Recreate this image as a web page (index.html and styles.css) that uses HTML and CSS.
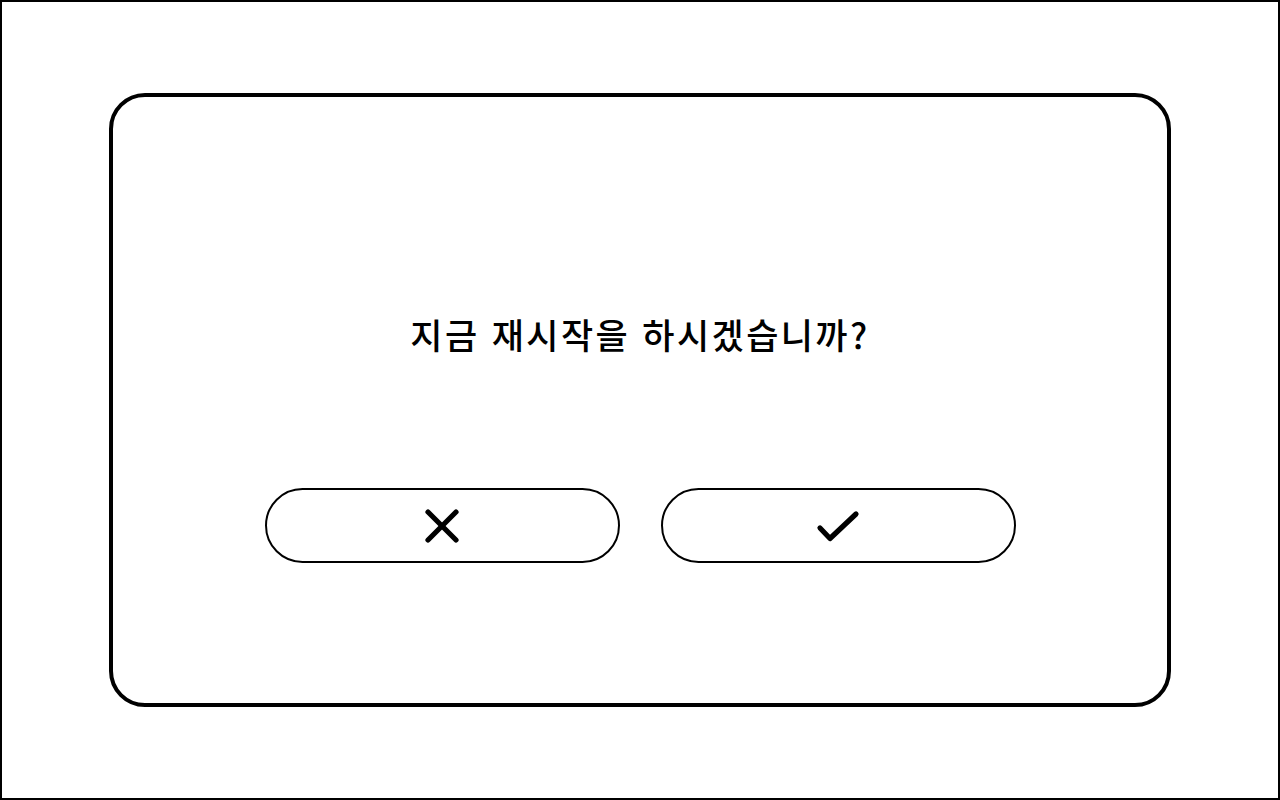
FILE: index.html
```html
<!DOCTYPE html>
<html lang="ko">
<head>
<meta charset="utf-8">
<title>재시작</title>
<link rel="stylesheet" href="styles.css">
</head>
<body>
<div class="screen">
  <div class="dialog">
    <p class="message">지금 재시작을 하시겠습니까?</p>
    <div class="actions">
      <button class="btn" type="button" aria-label="취소">
        <svg width="34" height="34" viewBox="0 0 34 34" fill="none" stroke="#000" stroke-width="5.2" stroke-linecap="round">
          <line x1="3" y1="3" x2="31" y2="31"/>
          <line x1="31" y1="3" x2="3" y2="31"/>
        </svg>
      </button>
      <button class="btn" type="button" aria-label="확인">
        <svg width="44" height="34" viewBox="0 0 44 34" fill="none" stroke="#000" stroke-width="5.2" stroke-linecap="round" stroke-linejoin="round">
          <polyline points="4,19 14,29.5 40,5"/>
        </svg>
      </button>
    </div>
  </div>
</div>
</body>
</html>
```

FILE: styles.css
```css
html, body {
  margin: 0;
  padding: 0;
  background: #fff;
}

.screen {
  box-sizing: border-box;
  width: 1280px;
  height: 800px;
  border: 2px solid #000;
  display: flex;
  align-items: center;
  justify-content: center;
  font-family: "Noto Sans CJK KR", "Noto Sans", sans-serif;
}

.dialog {
  box-sizing: border-box;
  width: 1062px;
  height: 614px;
  border: 4px solid #000;
  border-radius: 36px;
  display: flex;
  flex-direction: column;
  align-items: center;
  padding-top: 217px;
}

.message {
  margin: 0;
  font-size: 35px;
  line-height: 40px;
  font-weight: 500;
  letter-spacing: 2.4px;
  color: #000;
}

.actions {
  display: flex;
  gap: 41px;
  margin-top: 134px;
}

.btn {
  box-sizing: border-box;
  width: 355px;
  height: 75px;
  border: 2px solid #000;
  border-radius: 38px;
  background: #fff;
  padding: 0;
  display: flex;
  align-items: center;
  justify-content: center;
  cursor: pointer;
}
```
